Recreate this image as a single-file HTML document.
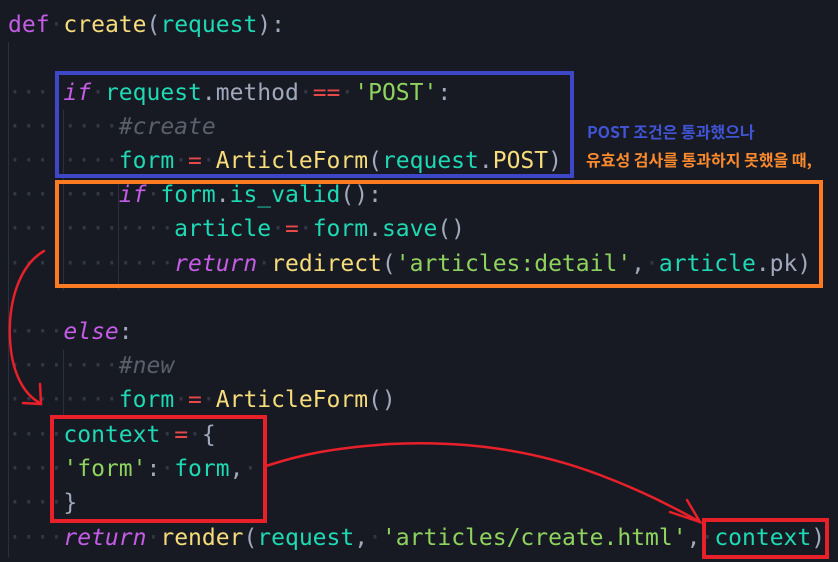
<!DOCTYPE html>
<html><head><meta charset="utf-8"><style>
body{margin:0;width:838px;height:562px;background:#171a23;overflow:hidden;position:relative;font-family:"DejaVu Sans Mono","Liberation Mono",monospace;}
.l{position:absolute;left:8px;height:34px;line-height:34px;font-size:23px;white-space:pre;color:#abb2bf;}
.w{color:#343846}
.k{color:#c55ce6;font-style:italic}
.d{color:#c55ce6}
.f{color:#f6dc7a}
.v{color:#1fd8b4}
.s{color:#8fd35f}
.o{color:#e74848}
.p{color:#a0a8bc}
.c{color:#5a5f6b;font-style:italic}
.g{position:absolute;width:1px;background:#2c303c}
.box{position:absolute;box-sizing:border-box;border:4px solid}
.note{position:absolute;font-family:"Noto Sans CJK KR","Liberation Sans",sans-serif;font-size:16px;font-weight:600;white-space:nowrap}
</style></head><body>
<div class="g" style="left:8px;top:42px;height:515px"></div>
<div class="g" style="left:63px;top:110px;height:180px"></div>
<div class="g" style="left:118px;top:180px;height:110px"></div>
<div class="g" style="left:63px;top:350px;height:68px"></div>

<div class="l" style="top:8px"><span class="d">def</span><span class="w">·</span><span class="f">create</span><span class="p">(</span><span class="v">request</span><span class="p">):</span></div>
<div class="l" style="top:76px"><span class="w">····</span><span class="k">if</span><span class="w">·</span><span class="v">request</span><span class="p">.method</span><span class="w">·</span><span class="o">==</span><span class="w">·</span><span class="s">'POST'</span><span class="p">:</span></div>
<div class="l" style="top:110px"><span class="w">········</span><span class="c">#create</span></div>
<div class="l" style="top:144px"><span class="w">········</span><span class="v">form</span><span class="w">·</span><span class="o">=</span><span class="w">·</span><span class="f">ArticleForm</span><span class="p">(</span><span class="v">request</span><span class="p">.</span><span class="f">POST</span><span class="p">)</span></div>
<div class="l" style="top:178px"><span class="w">········</span><span class="k">if</span><span class="w">·</span><span class="v">form</span><span class="p">.</span><span class="v">is_valid</span><span class="p">():</span></div>
<div class="l" style="top:212px"><span class="w">············</span><span class="v">article</span><span class="w">·</span><span class="o">=</span><span class="w">·</span><span class="v">form</span><span class="p">.</span><span class="v">save</span><span class="p">()</span></div>
<div class="l" style="top:247px"><span class="w">············</span><span class="k">return</span><span class="w">·</span><span class="f">redirect</span><span class="p">(</span><span class="s">'articles:detail'</span><span class="p">,</span><span class="w">·</span><span class="v">article</span><span class="p">.pk)</span></div>
<div class="l" style="top:315px"><span class="w">····</span><span class="k">else</span><span class="p">:</span></div>
<div class="l" style="top:349px"><span class="w">········</span><span class="c">#new</span></div>
<div class="l" style="top:383px"><span class="w">········</span><span class="v">form</span><span class="w">·</span><span class="o">=</span><span class="w">·</span><span class="f">ArticleForm</span><span class="p">()</span></div>
<div class="l" style="top:418px"><span class="w">····</span><span class="v">context</span><span class="w">·</span><span class="o">=</span><span class="w">·</span><span class="p">{</span></div>
<div class="l" style="top:452px"><span class="w">····</span><span class="s">'form'</span><span class="p">:</span><span class="w">·</span><span class="v">form</span><span class="p">,</span><span class="w">·</span></div>
<div class="l" style="top:486px"><span class="w">····</span><span class="p">}</span></div>
<div class="l" style="top:521px"><span class="w">····</span><span class="k">return</span><span class="w">·</span><span class="f">render</span><span class="p">(</span><span class="v">request</span><span class="p">,</span><span class="w">·</span><span class="s">'articles/create.html'</span><span class="p">,</span><span class="w">·</span><span class="v">context</span><span class="p">)</span></div>

<div class="box" style="left:55px;top:71px;width:519px;height:107px;border-color:#3f47c9"></div>
<div class="box" style="left:55px;top:180px;width:768px;height:108px;border-color:#fb7a22"></div>
<div class="box" style="left:50px;top:415px;width:217px;height:108px;border-color:#e8202a"></div>
<div class="box" style="left:702px;top:518px;width:127px;height:41px;border-color:#e8202a"></div>

<div class="note" style="left:587px;top:119px;color:#4154d6">POST 조건은 통과했으나</div>
<div class="note" style="left:586px;top:147px;color:#fb8a2c">유효성 검사를 통과하지 못했을 때,</div>

<svg style="position:absolute;left:0;top:0" width="838" height="562">
<g fill="none" stroke="#e8202a" stroke-width="2.5" stroke-linecap="round">
<path d="M44,251 C20,265 8,300 10,340 C12,375 25,395 40,403"/>
<path d="M40,384 L41,404 L23,403"/>
<path d="M266,466 C300,455 330,448 390,444 C470,440 540,452 600,475 C640,490 670,505 700,522"/>
<path d="M687,500 L700,522 L670,512"/>
</g></svg>
</body></html>
